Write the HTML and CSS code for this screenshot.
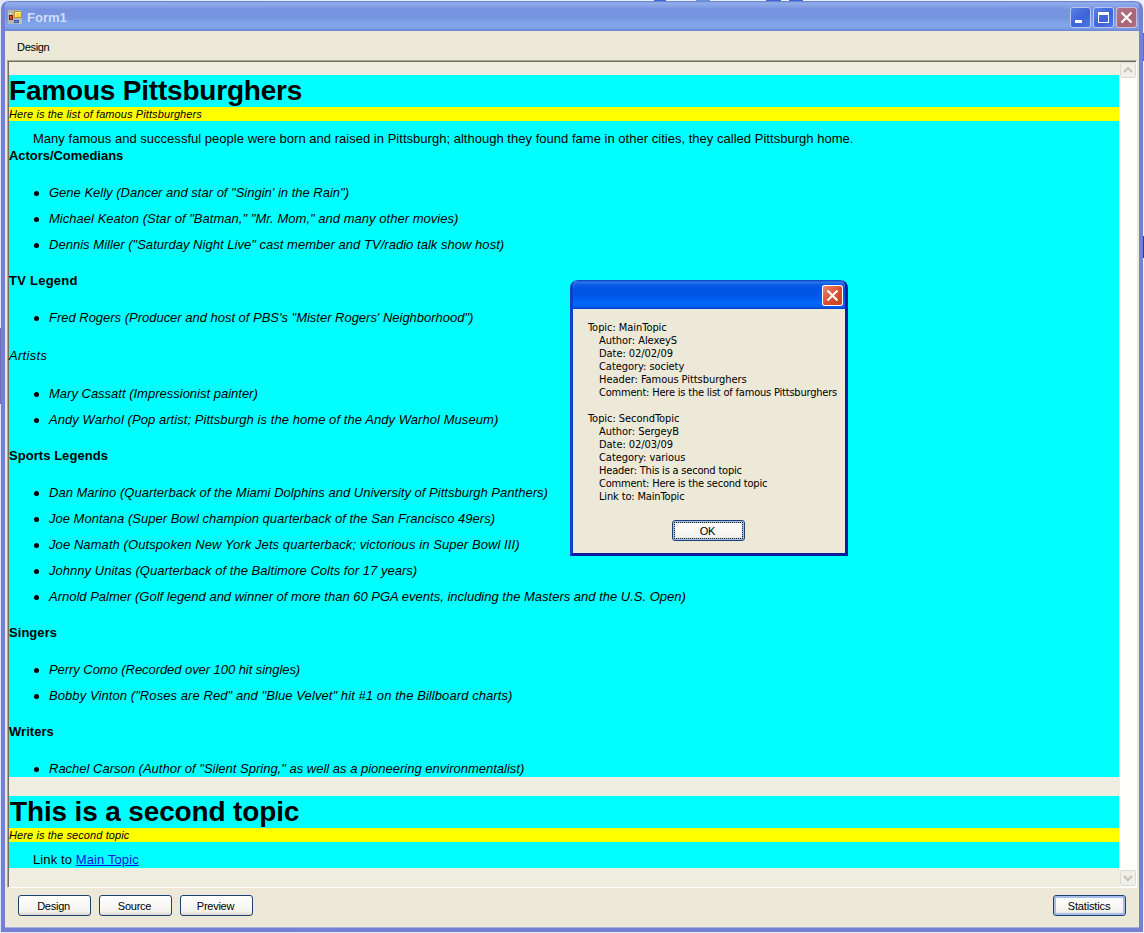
FILE: index.html
```html
<!DOCTYPE html>
<html lang="en">
<head>
<meta charset="utf-8">
<title>Form1</title>
<link rel="stylesheet" href="styles.css">
</head>
<body>
<div class="desktop">
<div class="window">
  <header class="titlebar">
    <svg class="app-icon" width="14" height="14" viewBox="0 0 14 14"><rect width="14" height="14" fill="#b7b5ad"/><path d="M0 3.5H5M12 9V14" stroke="#d3d1c8"/><rect x="6.500" y="1.500" width="7" height="6" fill="#ffd34c" stroke="#b9902b"/><path d="M7 2.500h6M7.500 2v5" stroke="#fff2a8"/><rect x="1.500" y="5.500" width="3" height="4" fill="#d0493c" stroke="#8b1a17"/><rect x="6.500" y="10.500" width="4" height="2" fill="#5a93ed" stroke="#3559b6"/></svg>
    <h1 class="caption">Form1</h1>
    <div class="controls">
      <span class="ctl"><svg width="21" height="21"><rect x="5" y="13" width="7" height="3" fill="#fff"/></svg></span>
      <span class="ctl"><svg width="21" height="21"><path d="M5 5h11v11H5z M6 8v7h9V8z" fill="#fff" fill-rule="evenodd"/></svg></span>
      <span class="ctl close"><svg width="21" height="21"><path d="M5.500 5.500L15.500 15.500M15.500 5.500L5.500 15.500" stroke="#fff" stroke-width="2.200"/></svg></span>
    </div>
  </header>
  <nav class="menubar">Design</nav>
  <main class="viewer">
    <div class="page">
      <article class="topic">
        <h2 class="headline">Famous Pittsburghers</h2>
        <p class="comment">Here is the list of famous Pittsburghers</p>
        <p class="lead">Many famous and successful people were born and raised in Pittsburgh; although they found fame in other cities, they called Pittsburgh home.</p>
        <h3 class="group first">Actors/Comedians</h3>
        <ul class="people">
          <li>Gene Kelly (Dancer and star of "Singin' in the Rain")</li>
          <li class="loose-1">Michael Keaton (Star of "Batman," "Mr. Mom," and many other movies)</li>
          <li class="loose-1">Dennis Miller ("Saturday Night Live" cast member and TV/radio talk show host)</li>
        </ul>
        <h3 class="group wide">TV Legend</h3>
        <ul class="people">
          <li class="tight-1">Fred Rogers (Producer and host of PBS's "Mister Rogers' Neighborhood")</li>
        </ul>
        <h3 class="group plain">Artists</h3>
        <ul class="people">
          <li>Mary Cassatt (Impressionist painter)</li>
          <li class="loose-2">Andy Warhol (Pop artist; Pittsburgh is the home of the Andy Warhol Museum)</li>
        </ul>
        <h3 class="group">Sports Legends</h3>
        <ul class="people">
          <li class="loose-0">Dan Marino (Quarterback of the Miami Dolphins and University of Pittsburgh Panthers)</li>
          <li class="loose-0">Joe Montana (Super Bowl champion quarterback of the San Francisco 49ers)</li>
          <li class="loose-3">Joe Namath (Outspoken New York Jets quarterback; victorious in Super Bowl III)</li>
          <li class="loose-1">Johnny Unitas (Quarterback of the Baltimore Colts for 17 years)</li>
          <li>Arnold Palmer (Golf legend and winner of more than 60 PGA events, including the Masters and the U.S. Open)</li>
        </ul>
        <h3 class="group">Singers</h3>
        <ul class="people">
          <li class="tight-2">Perry Como (Recorded over 100 hit singles)</li>
          <li class="loose-3">Bobby Vinton ("Roses are Red" and "Blue Velvet" hit #1 on the Billboard charts)</li>
        </ul>
        <h3 class="group">Writers</h3>
        <ul class="people">
          <li>Rachel Carson (Author of "Silent Spring," as well as a pioneering environmentalist)</li>
        </ul>
      </article>
      <article class="topic second">
        <h2 class="headline">This is a second topic</h2>
        <p class="comment">Here is the second topic</p>
        <p class="lead">Link to <a class="link">Main Topic</a></p>
      </article>
    </div>
    <div class="scrollbar">
      <span class="arrow"><svg width="14" height="14"><path d="M3 9L7 5L11 9" fill="none" stroke="#c5c3b8" stroke-width="2.200"/></svg></span>
      <span class="arrow"><svg width="14" height="14"><path d="M3 5L7 9L11 5" fill="none" stroke="#c5c3b8" stroke-width="2.200"/></svg></span>
    </div>
  </main>
  <footer class="actions">
    <span class="btn">Design</span><span class="btn">Source</span><span class="btn">Preview</span>
    <span class="btn default">Statistics</span>
  </footer>
</div>
<section class="dialog">
  <div class="dialog-title"><span class="dialog-close"><svg width="21" height="21"><path d="M5.500 5.500L15.500 15.500M15.500 5.500L5.500 15.500" stroke="#fff" stroke-width="2.200"/></svg></span></div>
  <div class="dialog-body">
    <dl class="report">
      <dt>Topic: MainTopic</dt>
      <dd>Author: AlexeyS</dd>
      <dd>Date: 02/02/09</dd>
      <dd>Category: society</dd>
      <dd>Header: Famous Pittsburghers</dd>
      <dd class="long">Comment: Here is the list of famous Pittsburghers</dd>
    </dl>
    <dl class="report">
      <dt>Topic: SecondTopic</dt>
      <dd>Author: SergeyB</dd>
      <dd>Date: 02/03/09</dd>
      <dd>Category: various</dd>
      <dd class="long">Header: This is a second topic</dd>
      <dd class="long">Comment: Here is the second topic</dd>
      <dd class="mid">Link to: MainTopic</dd>
    </dl>
    <span class="btn ok">OK</span>
  </div>
</section>
</div>
</body>
</html>
```

FILE: styles.css
```css
* { box-sizing: border-box; }
body { margin: 0; font-family: "Liberation Sans", Arial, sans-serif; color: #000; }
h1, h2, h3, p, ul, dl, dd { margin: 0; padding: 0; }
svg { display: block; }
.desktop {
  position: relative; width: 1144px; height: 933px; overflow: hidden; padding: 1px;
  background:
    linear-gradient(#5a6cc8, #5a6cc8) 100% 33px / 2px 28px no-repeat,
    linear-gradient(#2c3c96, #2c3c96) 100% 236px / 2px 22px no-repeat,
    linear-gradient(#6a6cb4, #6a6cb4) 0 328px / 2px 76px no-repeat,
    linear-gradient(#3c64dc, #3c64dc) 654px 0 / 12px 1px no-repeat,
    linear-gradient(#6c90e6, #6c90e6) 696px 0 / 14px 1px no-repeat,
    linear-gradient(#3c64dc, #3c64dc) 766px 0 / 15px 1px no-repeat,
    linear-gradient(#3c64dc, #3c64dc) 789px 0 / 14px 1px no-repeat,
    linear-gradient(90deg, #dfe6fa, #e4f1fa 40%, #edf1fc);
}
.window { width: 1142px; height: 931px; display: flex; flex-direction: column; border: solid #7480d4; border-width: 0 4px 4px; border-radius: 8px 8px 0 0; background: #ece9d8; box-shadow: inset 0 -1px #a9b0dc; overflow: hidden; }
.titlebar { height: 30px; flex: none; margin: 0 -4px; display: flex; align-items: center; padding: 1px 6px 0 7px; background: linear-gradient(#6377c3 0, #93ade9 6%, #88a5e8 14%, #7793df 28%, #7795e0 55%, #82a7ed 80%, #7e9fe8 90%, #6b83d1 100%); }
.caption { flex: 1; margin-left: 5px; padding-top: 3px; font: bold 13px/16px "Liberation Sans", sans-serif; color: #d0dff8; }
.controls { display: flex; gap: 2px; padding-top: 2px; }
.ctl { width: 21px; height: 21px; border-radius: 3px; background: linear-gradient(135deg, #5f83e4, #3c63da 55%, #4f79ea); box-shadow: inset 0 0 0 1px #b6c8f2; }
.ctl.close { background: linear-gradient(135deg, #b3768c, #a96475 60%, #b5707c); box-shadow: inset 0 0 0 1px #cfbddd; }
.menubar { height: 29px; flex: none; padding: 8px 12px; font-size: 11px; line-height: 16px; letter-spacing: -.3px; }
.viewer { height: 828px; flex: none; margin: 0 2px; display: flex; border: 1px solid; border-color: #aca899 #fff #fff #aca899; box-shadow: inset 1px 1px #716f64; background: #f0eee1; }
.page { flex: 1; padding: 14px 0 0 1px; }
.topic { height: 702px; background: #0ff; font-size: 13px; line-height: 16px; white-space: nowrap; }
.topic.second { margin-top: 19px; height: 72px; }
.headline { height: 32px; font-size: 28px; line-height: 32px; letter-spacing: -.2px; }
.second .headline { padding-left: 1px; letter-spacing: -.15px; }
.comment { height: 14px; background: #ff0; font-size: 11px; line-height: 14px; font-style: italic; letter-spacing: .1px; }
.lead { padding: 10px 0 0 24px; letter-spacing: .022px; }
.second .lead { letter-spacing: .11px; }
.group { font-size: 13px; line-height: 16px; letter-spacing: .05px; }
.group.first { margin-top: 1px; letter-spacing: -.04px; }
.group.wide { letter-spacing: .25px; }
.group.plain { margin: 22px 0; font-weight: normal; font-style: italic; letter-spacing: .3px; }
.people { list-style: none; display: flex; flex-direction: column; gap: 10px; margin: 21px 0 20px; padding-left: 24px; font-style: italic; }
.people li { display: flex; align-items: center; height: 16px; }
.people li::before { content: ""; flex: none; width: 5px; height: 5px; margin: 1px 10px 0 1px; border-radius: 50%; background: #000; }
.loose-0 { letter-spacing: .012px; }
.loose-1 { letter-spacing: .03px; }
.loose-2 { letter-spacing: .06px; }
.loose-3 { letter-spacing: .08px; }
.tight-1 { letter-spacing: -.014px; }
.tight-2 { letter-spacing: -.06px; }
.link { color: #1010e0; text-decoration: underline; }
.scrollbar { width: 16px; margin: 1px 0 0 1px; display: flex; flex-direction: column; justify-content: space-between; align-items: center; background: #fefefb; }
.arrow { width: 16px; height: 16px; margin: 0 0 1px; border: 1px solid #dddace; border-radius: 2px; background: #f1f0e8; }
.actions { display: flex; gap: 8px; padding: 7px 13px 0 13px; }
.btn { width: 73px; height: 21px; padding-right: 2px; border: 1px solid #1c4170; border-radius: 3px; background: linear-gradient(#fff, #f4f3ee 80%, #dcd8cc); font-size: 11px; line-height: 20px; letter-spacing: -.25px; text-align: center; }
.btn.default { margin-left: auto; padding-right: 1px; box-shadow: inset 0 0 0 2px #a5bdeb; letter-spacing: -.15px; }
.dialog { position: absolute; left: 570px; top: 280px; width: 278px; height: 276px; display: flex; flex-direction: column; border: solid; border-color: #0b35c0 #0a1f9c #0a1f9c #0b3fd0; border-width: 0 3px 3px; border-radius: 8px 8px 0 0; overflow: hidden; background: #ece9d8; }
.dialog-title { height: 29px; flex: none; margin: 0 -3px; padding: 5px 5px 0 0; display: flex; justify-content: flex-end; background: linear-gradient(#0a3fc0 0, #2b78f0 8%, #0a5ce8 16%, #0054e3 32%, #0057e8 55%, #0268fc 82%, #005cf0 92%, #003fc4 100%); }
.dialog-close { width: 21px; height: 21px; border-radius: 3px; background: linear-gradient(135deg, #ee8e73, #dc5032 50%, #c93e17); box-shadow: inset 0 0 0 1px #fff; }
.dialog-body { display: flex; flex-direction: column; padding: 12px 0 0 15px; }
.report { margin-bottom: 13px; font: 11px/13px "DejaVu Sans Condensed", "DejaVu Sans", sans-serif; letter-spacing: -.05px; white-space: nowrap; }
.report dd { padding-left: 11px; }
.report .mid { letter-spacing: -.15px; }
.report .long { letter-spacing: -.2px; }
.ok { margin: 4px 0 0 84px; box-shadow: inset 0 0 0 2px #a5bdeb; position: relative; }
.ok::after { content: ""; position: absolute; inset: 1px; border: 1px dotted #222; }
```
